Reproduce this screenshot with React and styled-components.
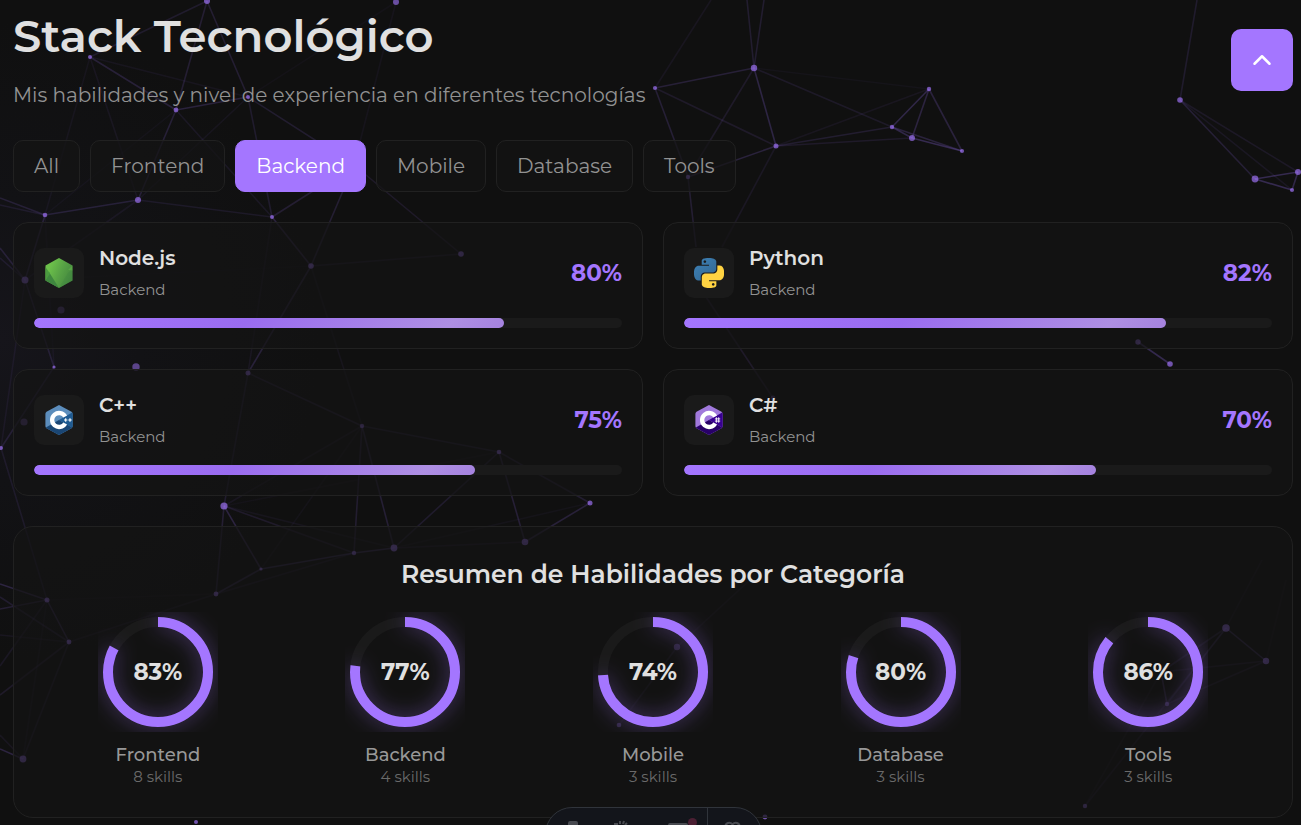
import React, { useState } from "react";
import styled, { createGlobalStyle, css } from "styled-components";
import { ChevronUp, Heart } from "lucide-react";

const GlobalStyle = createGlobalStyle`
  *, *::before, *::after { box-sizing: border-box; }
  body {
    margin: 0;
    background: #101010;
    color: #e0e0e0;
    font-family: Montserrat, Inter, "Liberation Sans", sans-serif;
  }
  h1, h2, h3, p, ul { margin: 0; padding: 0; }
`;

const Page = styled.div`
  position: relative;
  min-height: 100vh;
  overflow: hidden;
  background: radial-gradient(circle at 0 340px, #16151b 0, #121215 140px, #101010 320px);
`;

const Network = styled.svg`
  position: absolute;
  inset: 0;
  width: 100%;
  height: 100%;
  pointer-events: none;
`;

const Content = styled.main`
  position: relative;
  display: flex;
  flex-direction: column;
  gap: 30px;
  padding: 6px 8px 7px 13px;
`;

const Header = styled.header`
  display: flex;
  flex-direction: column;
  gap: 14px;
`;

const Title = styled.h1`
  font-size: 45px;
  line-height: 60px;
  font-weight: 600;
`;

const Subtitle = styled.p`
  font-size: 20px;
  line-height: 30px;
  color: #929292;
`;

const Filters = styled.div`
  display: flex;
  flex-wrap: wrap;
  gap: 10px;
`;

const FilterButton = styled.button`
  padding: 10px 20px;
  border: 1px solid #212121;
  border-radius: 10px;
  background: rgba(20, 20, 20, 0.7);
  color: #929292;
  font: inherit;
  font-size: 20px;
  line-height: 30px;
  cursor: pointer;
  ${({ $active }) =>
    $active &&
    css`
      background: #a476ff;
      border-color: #a476ff;
      color: #fff;
    `}
`;

const SkillGrid = styled.section`
  display: grid;
  grid-template-columns: repeat(2, 1fr);
  gap: 20px;
`;

const panel = css`
  border: 1px solid #212121;
  background: rgba(20, 20, 20, 0.7);
`;

const Card = styled.article`
  ${panel}
  display: flex;
  flex-direction: column;
  gap: 15px;
  padding: 20px;
  border-radius: 15px;
`;

const CardHead = styled.div`
  display: flex;
  align-items: center;
  gap: 15px;
`;

const IconTile = styled.div`
  display: grid;
  place-items: center;
  width: 50px;
  height: 50px;
  border-radius: 10px;
  background: #1a1a1a;
`;

const CardInfo = styled.div`
  display: flex;
  flex-direction: column;
  gap: 4px;
  flex: 1;
`;

const SkillName = styled.h3`
  font-size: 20px;
  line-height: 30px;
  font-weight: 600;
`;

const SkillKind = styled.p`
  font-size: 15px;
  line-height: 26px;
  color: #929292;
`;

const Percent = styled.span`
  font-size: 23px;
  line-height: 30px;
  font-weight: 700;
  color: #a476ff;
`;

const Track = styled.div`
  height: 10px;
  border-radius: 5px;
  background: #1a1a1a;
  overflow: hidden;
`;

const Fill = styled.div`
  height: 100%;
  border-radius: 5px;
  background: linear-gradient(135deg, #a476ff 0%, #9a6cf0 45%, #ae8fe3 88%, #a582df 100%);
`;

const Summary = styled.section`
  ${panel}
  display: flex;
  flex-direction: column;
  gap: 20px;
  padding: 30px;
  border-radius: 20px;
`;

const SummaryTitle = styled.h2`
  font-size: 25px;
  line-height: 35px;
  font-weight: 600;
  text-align: center;
`;

const RingGrid = styled.ul`
  display: grid;
  grid-template-columns: repeat(5, 1fr);
  gap: 20px;
  list-style: none;
`;

const RingItem = styled.li`
  display: flex;
  flex-direction: column;
  align-items: center;
`;

const RingBox = styled.div`
  display: grid;
  place-items: center;
  margin-bottom: 12px;
  & > * { grid-area: 1 / 1; }
`;

const RingSvg = styled.svg`
  display: block;
  overflow: hidden;
`;

const RingArc = styled.circle`
  filter: drop-shadow(0 0 10px rgba(164, 118, 255, 0.4));
`;

const RingValue = styled.span`
  font-size: 23px;
  line-height: 30px;
  font-weight: 700;
  z-index: 1;
`;

const RingLabel = styled.h3`
  font-size: 18px;
  line-height: 23px;
  font-weight: 500;
  color: #989898;
`;

const RingCount = styled.p`
  font-size: 15px;
  line-height: 20px;
  color: #6a6a6a;
`;

const TopButton = styled.button`
  position: fixed;
  top: 29px;
  right: 8px;
  display: grid;
  place-items: center;
  width: 62px;
  height: 62px;
  padding: 0;
  border: 0;
  border-radius: 10px;
  background: #a476ff;
  color: #fff;
  cursor: pointer;
`;

const DockLayer = styled.div`
  position: fixed;
  left: 13px;
  right: 8px;
  bottom: -36px;
  display: flex;
  justify-content: center;
  pointer-events: none;
`;

const Dock = styled.nav`
  display: flex;
  height: 54px;
  border: 1px solid #30343b;
  border-radius: 27px;
  background: #13151b;
  overflow: hidden;
`;

const DockGroup = styled.div`
  display: flex;
  align-items: flex-start;
  gap: 28px;
  padding: 12px 10px 0 17px;
  & + & {
    padding: 12px 20px 0 16px;
    border-left: 1px solid #30343b;
  }
`;

const DockButton = styled.button`
  position: relative;
  display: flex;
  justify-content: center;
  width: ${({ $wide }) => ($wide ? "38px" : "auto")};
  padding: 0;
  border: 0;
  background: none;
  color: #484a50;
  pointer-events: auto;
`;

const Dot = styled.span`
  position: absolute;
  top: -2px;
  right: 0;
  width: 9px;
  height: 9px;
  border-radius: 50%;
  background: #4b1f33;
`;

/* [x, y, radius, opacity] */
const NODES = [
  [207, 1, 3, 0.65], [90, 57, 2, 0.65], [396, 2, 3, 0.6], [248, 97, 2, 0.65], [176, 110, 2.4, 0.65],
  [138, 200, 3, 0.65], [45, 215, 2.3, 0.65], [272, 217, 2, 0.65], [311, 266, 2.8, 0.65], [461, 254, 2.8, 0.65],
  [25, 280, 3.5, 0.65], [61, 310, 3.6, 0.4], [54, 367, 1.6, 0.65], [136, 367, 3.7, 0.5], [24, 422, 3.6, 0.4],
  [1, 448, 2, 0.65], [248, 373, 2.5, 0.65], [362, 426, 2.2, 0.55], [224, 506, 3.6, 0.65], [354, 553, 2.2, 0.6],
  [394, 548, 3.4, 0.7], [261, 569, 1.6, 0.65], [216, 594, 2.4, 0.65], [47, 600, 2.5, 0.65], [69, 642, 2.4, 0.65],
  [23, 759, 3.4, 0.65], [196, 822, 2, 0.65], [655, 88, 2.1, 0.65], [754, 68, 3.2, 0.65], [776, 146, 2.5, 0.65],
  [688, 177, 2.2, 0.65], [929, 89, 2.2, 0.65], [892, 127, 2.2, 0.65], [912, 138, 3, 0.65], [962, 151, 2.1, 0.65],
  [1180, 100, 2.8, 0.65], [1255, 179, 3.4, 0.65], [1298, 172, 3, 0.65], [1292, 190, 2.1, 0.65],
  [1138, 342, 2.7, 0.65], [1170, 364, 2.8, 0.65], [499, 452, 2.3, 0.65], [590, 503, 2.5, 0.65],
  [525, 542, 3.3, 0.65], [773, 398, 2.4, 0.35], [677, 647, 3.2, 0.55], [619, 725, 2.3, 0.65],
  [765, 817, 2.4, 0.65], [1226, 628, 3.8, 0.7], [1266, 661, 3.2, 0.7], [1167, 704, 2.2, 0.6], [1085, 806, 2.2, 0.6],
];

/* [x1, y1, x2, y2, opacity] */
const LINKS = [
  [207, 1, 90, 57, 0.18], [207, 1, 176, 110, 0.22], [207, 1, 248, 97, 0.22], [90, 57, 176, 110, 0.25],
  [90, 57, 248, 97, 0.09], [90, 57, 45, 215, 0.08], [90, 57, 138, 200, 0.1], [176, 110, 248, 97, 0.28],
  [176, 110, 138, 200, 0.24], [176, 110, 272, 217, 0.12], [176, 110, 45, 215, 0.06], [248, 97, 272, 217, 0.18],
  [248, 97, 138, 200, 0.09], [248, 97, 396, 2, 0.05], [248, 97, 354, 165, 0.2], [354, 165, 311, 266, 0.22],
  [354, 165, 272, 217, 0.22], [354, 165, 396, 2, 0.07], [354, 165, 461, 254, 0.16], [138, 200, 45, 215, 0.24],
  [138, 200, 272, 217, 0.14], [138, 200, 25, 280, 0.1], [45, 215, 0, 198, 0.22], [45, 215, 25, 280, 0.24],
  [45, 215, 0, 205, 0.15], [45, 215, 54, 367, 0.07], [0, 248, 25, 280, 0.22], [0, 258, 25, 280, 0.15],
  [25, 280, 54, 367, 0.2], [272, 217, 311, 266, 0.28], [272, 217, 248, 373, 0.1], [311, 266, 461, 254, 0.14],
  [311, 266, 248, 373, 0.25], [311, 266, 362, 426, 0.08], [311, 266, 25, 280, 0.03], [54, 367, 1, 448, 0.2],
  [25, 280, 1, 448, 0.1], [1, 448, 47, 600, 0.14], [248, 373, 362, 426, 0.2], [248, 373, 224, 506, 0.18],
  [362, 426, 499, 452, 0.18], [362, 426, 224, 506, 0.1], [362, 426, 354, 553, 0.2], [362, 426, 394, 548, 0.23],
  [362, 426, 261, 569, 0.06], [499, 452, 394, 548, 0.18], [499, 452, 525, 542, 0.24], [499, 452, 590, 503, 0.2],
  [590, 503, 525, 542, 0.26], [590, 503, 394, 548, 0.06], [525, 542, 394, 548, 0.12], [499, 452, 224, 506, 0.05],
  [224, 506, 216, 594, 0.22], [224, 506, 261, 569, 0.3], [224, 506, 354, 553, 0.16], [224, 506, 394, 548, 0.08],
  [354, 553, 394, 548, 0.35], [354, 553, 261, 569, 0.32], [354, 553, 216, 594, 0.12], [261, 569, 216, 594, 0.28],
  [216, 594, 69, 642, 0.1], [216, 594, 47, 600, 0.05], [0, 584, 47, 600, 0.3], [0, 609, 47, 600, 0.22],
  [47, 600, 69, 642, 0.3], [0, 597, 69, 642, 0.18], [0, 635, 69, 642, 0.1], [0, 695, 69, 642, 0.16],
  [69, 642, 23, 759, 0.14], [47, 600, 23, 759, 0.07], [47, 600, 0, 666, 0.12], [0, 749, 23, 759, 0.3],
  [0, 735, 23, 759, 0.1], [747, 0, 754, 68, 0.2], [764, 0, 754, 68, 0.2], [711, 0, 655, 88, 0.1],
  [655, 88, 754, 68, 0.25], [655, 88, 776, 146, 0.16], [655, 88, 688, 177, 0.24], [754, 68, 776, 146, 0.32],
  [754, 68, 688, 177, 0.16], [754, 68, 892, 127, 0.15], [754, 68, 929, 89, 0.06], [776, 146, 688, 177, 0.28],
  [776, 146, 892, 127, 0.2], [776, 146, 912, 138, 0.16], [776, 146, 929, 89, 0.1], [776, 146, 722, 247, 0.12],
  [688, 177, 696, 247, 0.22], [706, 297, 773, 398, 0.16], [929, 89, 892, 127, 0.35], [929, 89, 912, 138, 0.3],
  [929, 89, 962, 151, 0.28], [892, 127, 912, 138, 0.35], [892, 127, 962, 151, 0.28], [912, 138, 962, 151, 0.4],
  [1197, 0, 1180, 100, 0.18], [1180, 100, 1255, 179, 0.24], [1180, 100, 1298, 172, 0.14],
  [1180, 100, 1292, 190, 0.12], [1255, 179, 1298, 172, 0.4], [1255, 179, 1292, 190, 0.4],
  [1298, 172, 1292, 190, 0.35], [1138, 342, 1170, 364, 0.38], [1226, 628, 1266, 661, 0.35],
  [1226, 628, 1161, 672, 0.22], [1226, 628, 1167, 704, 0.2], [1266, 661, 1161, 672, 0.16],
  [1266, 661, 1167, 704, 0.16], [1161, 672, 1167, 704, 0.35], [1226, 628, 1085, 806, 0.12],
  [1161, 672, 1085, 806, 0.06], [1226, 628, 1262, 560, 0.07], [1266, 661, 1286, 580, 0.05],
  [677, 647, 619, 725, 0.14], [677, 647, 750, 580, 0.1],
];

function ParticleNetwork() {
  return (
    <Network viewBox="0 0 1301 825" preserveAspectRatio="xMinYMin slice" aria-hidden="true">
      <g stroke="#8763dc" strokeWidth="1.6" opacity="0.78">
        {LINKS.map(([x1, y1, x2, y2, o], i) => (
          <line key={i} x1={x1} y1={y1} x2={x2} y2={y2} strokeOpacity={o} />
        ))}
      </g>
      <g fill="#a476ff">
        {NODES.map(([cx, cy, r, o], i) => (
          <circle key={i} cx={cx} cy={cy} r={r} fillOpacity={o} />
        ))}
      </g>
    </Network>
  );
}

function NodeLogo() {
  return (
    <svg width="30" height="30" viewBox="0 0 30 30" aria-hidden="true">
      <defs>
        <linearGradient id="node-face" x1="0.2" y1="0.2" x2="1" y2="0.6">
          <stop offset="0" stopColor="#6cc04a" />
          <stop offset="0.5" stopColor="#57a245" />
          <stop offset="1" stopColor="#45883f" />
        </linearGradient>
      </defs>
      <path d="M15 0 28.5 7.5v15L15 30 1.5 22.5v-15Z" fill="url(#node-face)" />
      <path d="M5 14 15 30 1.5 22.5Z" fill="#3f873f" />
      <path d="M1.5 9v13.5L6 15.5Z" fill="#4a9a3f" />
      <path d="M28.5 11v11.5L15 30 24 15Z" fill="#3f873f" opacity="0.35" />
      <path d="M24 12 28.5 7.5v5Z" fill="#6cc04a" opacity="0.4" />
    </svg>
  );
}

function PythonLogo() {
  return (
    <svg width="30" height="30" viewBox="0 0 24 24" aria-hidden="true">
      <defs>
        <linearGradient id="py-blue" x1="0" y1="0" x2="1" y2="1">
          <stop offset="0" stopColor="#3e82b8" />
          <stop offset="1" stopColor="#326690" />
        </linearGradient>
      </defs>
      <path
        fill="url(#py-blue)"
        d="M14.25.18l.9.2.73.26.59.3.45.32.34.34.25.34.16.33.1.3.04.26.02.2-.01.13V8.5l-.05.63-.13.55-.21.46-.26.38-.3.31-.33.25-.35.19-.35.14-.33.1-.3.07-.26.04-.21.02H8.77l-.69.05-.59.14-.5.22-.41.27-.33.32-.27.35-.2.36-.15.37-.1.35-.07.32-.04.27-.02.21v3.06H3.17l-.21-.03-.28-.07-.32-.12-.35-.18-.36-.26-.36-.36-.35-.46-.32-.59-.28-.73-.21-.88-.14-1.05-.05-1.23.06-1.22.16-1.04.24-.87.32-.71.36-.57.4-.44.42-.33.42-.24.4-.16.36-.1.32-.05.24-.01h.16l.06.01h8.16v-.83H6.18l-.01-2.75-.02-.37.05-.34.11-.31.17-.28.25-.26.31-.23.38-.2.44-.18.51-.15.58-.12.64-.1.71-.06.77-.04.84-.02 1.27.05zm-6.3 1.98l-.23.33-.08.41.08.41.23.34.33.22.41.09.41-.09.33-.22.23-.34.08-.41-.08-.41-.23-.33-.33-.22-.41-.09-.41.09z"
      />
      <path
        fill="#ffd342"
        d="M21.1 6.11l.28.06.32.12.35.18.36.27.36.35.35.47.32.59.28.73.21.88.14 1.04.05 1.23-.06 1.23-.16 1.04-.24.86-.32.71-.36.57-.4.45-.42.33-.42.24-.4.16-.36.09-.32.05-.24.02-.16-.01h-8.22v.82h5.84l.01 2.76.02.36-.05.34-.11.31-.17.29-.25.25-.31.24-.38.2-.44.17-.51.15-.58.13-.64.09-.71.07-.77.04-.84.01-1.27-.04-1.07-.14-.9-.2-.73-.25-.59-.3-.45-.33-.34-.34-.25-.34-.16-.33-.1-.3-.04-.25-.02-.2.01-.13v-5.34l.05-.64.13-.54.21-.46.26-.38.3-.32.33-.24.35-.2.35-.14.33-.1.3-.06.26-.04.21-.02.13-.01h5.84l.69-.05.59-.14.5-.21.41-.28.33-.32.27-.35.2-.36.15-.36.1-.35.07-.32.04-.28.02-.21V6.07h2.09l.14.01zm-6.47 14.25l-.23.33-.08.41.08.41.23.33.33.23.41.08.41-.08.33-.23.23-.33.08-.41-.08-.41-.23-.33-.33-.23-.41-.08-.41.08z"
      />
    </svg>
  );
}

function HexLogo({ light, dark, side, children }) {
  return (
    <svg width="30" height="30" viewBox="0 0 30 30" aria-hidden="true">
      <path d="M15 0 27.5 6.8Q28.6 7.5 28.6 9V21q0 1.5-1.1 2.2L15 30 2.5 23.2Q1.4 22.5 1.4 21V9q0-1.5 1.1-2.2Z" fill={light} />
      <path d="M28.2 7.6Q28.6 8.2 28.6 9V21q0 .9-.5 1.5L15 15Z" fill={side} />
      <path d="M15 15 28.1 22.5 27.5 23.2 15 30 2.5 23.2 1.9 22.5Z" fill={dark} />
      <path d="M21.2 11.5A7 7 0 1 0 21.2 18.5" fill="none" stroke="#fff" strokeWidth="4.3" />
      {children}
    </svg>
  );
}

function CppLogo() {
  return (
    <HexLogo light="#5c8dbc" dark="#1a4674" side="#1f5b92">
      <path d="M20 15h3.4M21.7 13.3v3.4M24.3 15h3.4M26 13.3v3.4" stroke="#fff" strokeWidth="1.1" />
    </HexLogo>
  );
}

function CSharpLogo() {
  return (
    <HexLogo light="#a179dc" dark="#280068" side="#390091">
      <path d="M22.4 12.3v5.4M24.7 12.3v5.4M20.9 13.9h5.3M20.9 16.1h5.3" stroke="#fff" strokeWidth="0.9" />
    </HexLogo>
  );
}

function PrinterIcon() {
  return (
    <svg width="20" height="20" viewBox="0 0 20 20" fill="currentColor" aria-hidden="true">
      <path d="M7 1h6a2 2 0 0 1 2 2v2h2a2 2 0 0 1 2 2v8H1V7a2 2 0 0 1 2-2h2V3a2 2 0 0 1 2-2Z" />
    </svg>
  );
}

function SparkIcon() {
  return (
    <svg width="20" height="20" viewBox="0 0 20 20" fill="none" stroke="currentColor" strokeWidth="2" aria-hidden="true">
      <path d="M3 4h4M9 1v3M13 1l-1 3M16 3l-2 2M10 7v11" />
    </svg>
  );
}

function ScreenIcon() {
  return (
    <svg width="20" height="20" viewBox="0 0 20 20" fill="none" stroke="currentColor" strokeWidth="2" aria-hidden="true">
      <rect x="1" y="4" width="18" height="13" rx="1" />
    </svg>
  );
}

const CATEGORIES = ["All", "Frontend", "Backend", "Mobile", "Database", "Tools"];

const SKILLS = [
  { name: "Node.js", value: 80, Logo: NodeLogo },
  { name: "Python", value: 82, Logo: PythonLogo },
  { name: "C++", value: 75, Logo: CppLogo },
  { name: "C#", value: 70, Logo: CSharpLogo },
];

const TOTALS = [
  { name: "Frontend", value: 83, count: 8 },
  { name: "Backend", value: 77, count: 4 },
  { name: "Mobile", value: 74, count: 3 },
  { name: "Database", value: 80, count: 3 },
  { name: "Tools", value: 86, count: 3 },
];

function SkillCard({ name, value, Logo }) {
  return (
    <Card>
      <CardHead>
        <IconTile><Logo /></IconTile>
        <CardInfo>
          <SkillName>{name}</SkillName>
          <SkillKind>Backend</SkillKind>
        </CardInfo>
        <Percent>{value}%</Percent>
      </CardHead>
      <Track role="progressbar" aria-label={name} aria-valuenow={value} aria-valuemin={0} aria-valuemax={100}>
        <Fill style={{ width: `${value}%` }} />
      </Track>
    </Card>
  );
}

function Ring({ name, value, count }) {
  return (
    <RingItem>
      <RingBox>
        <RingSvg width="120" height="120" viewBox="0 0 120 120" aria-hidden="true">
          <circle cx="60" cy="60" r="50" fill="none" stroke="#1a1a1a" strokeWidth="10" />
          <RingArc
            cx="60" cy="60" r="50" fill="none" stroke="#a476ff" strokeWidth="10"
            pathLength="100" strokeDasharray={`${value} 100`} transform="rotate(-90 60 60)"
          />
        </RingSvg>
        <RingValue>{value}%</RingValue>
      </RingBox>
      <RingLabel>{name}</RingLabel>
      <RingCount>{count} skills</RingCount>
    </RingItem>
  );
}

export default function App() {
  const [active, setActive] = useState("Backend");
  return (
    <Page>
      <GlobalStyle />
      <ParticleNetwork />
      <Content>
        <Header>
          <Title>Stack Tecnológico</Title>
          <Subtitle>Mis habilidades y nivel de experiencia en diferentes tecnologías</Subtitle>
        </Header>
        <Filters>
          {CATEGORIES.map((c) => (
            <FilterButton key={c} type="button" $active={c === active} aria-pressed={c === active} onClick={() => setActive(c)}>
              {c}
            </FilterButton>
          ))}
        </Filters>
        <SkillGrid>
          {SKILLS.map((s) => <SkillCard key={s.name} {...s} />)}
        </SkillGrid>
        <Summary>
          <SummaryTitle>Resumen de Habilidades por Categoría</SummaryTitle>
          <RingGrid>
            {TOTALS.map((t) => <Ring key={t.name} {...t} />)}
          </RingGrid>
        </Summary>
      </Content>
      <TopButton type="button" aria-label="Volver arriba"><ChevronUp size={30} /></TopButton>
      <DockLayer>
        <Dock>
          <DockGroup>
            <DockButton type="button" aria-label="Imprimir"><PrinterIcon /></DockButton>
            <DockButton type="button" aria-label="Efectos"><SparkIcon /></DockButton>
            <DockButton type="button" aria-label="Pantalla" $wide><ScreenIcon /><Dot /></DockButton>
          </DockGroup>
          <DockGroup>
            <DockButton type="button" aria-label="Favorito"><Heart size={17} strokeWidth={3} /></DockButton>
          </DockGroup>
        </Dock>
      </DockLayer>
    </Page>
  );
}
